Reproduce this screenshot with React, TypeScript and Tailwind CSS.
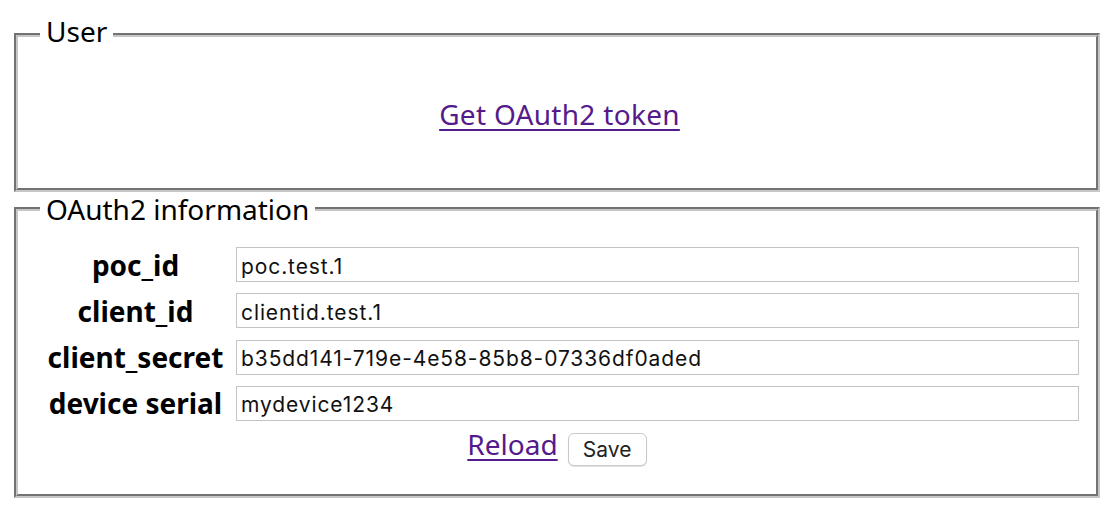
import React, { useState } from 'react';

const fields = [
  { label: 'poc_id', value: 'poc.test.1' },
  { label: 'client_id', value: 'clientid.test.1' },
  { label: 'client_secret', value: 'b35dd141-719e-4e58-85b8-07336df0aded' },
  { label: 'device serial', value: 'mydevice1234' },
];

const App: React.FC = () => {
  const [values, setValues] = useState(fields.map((f) => f.value));

  const update = (i: number, v: string) => {
    const next = [...values];
    next[i] = v;
    setValues(next);
  };

  return (
    <div className="min-h-[531px] bg-white pt-[12px] font-['Noto_Sans',sans-serif] text-black">
      <fieldset className="ml-[14px] w-[1086px] border-4 border-[#c6c6c6] [border-style:groove] pl-[22px] pr-[17px]">
        <legend className="px-[6px] pb-[8px] text-[28px] leading-[38px]">User</legend>
        <div className="h-[130px] pt-[37px] text-center">
          <a
            href="#"
            className="text-[28px] leading-[38px] tracking-[0.3px] text-[#551a8b] underline decoration-2 underline-offset-[4px]"
          >
            Get OAuth2 token
          </a>
        </div>
      </fieldset>

      <fieldset className="ml-[14px] w-[1086px] border-4 border-[#c6c6c6] [border-style:groove] pl-[22px] pr-[17px] pb-[28px]">
        <legend className="px-[6px] text-[28px] leading-[34px]">OAuth2 information</legend>
        <div className="grid grid-cols-[191px_1fr] gap-x-[5px] gap-y-[11.33px] pt-[21px]">
          {fields.map((f, i) => (
            <React.Fragment key={f.label}>
              <label className="flex h-[35px] items-center justify-center whitespace-nowrap text-[28px] font-bold leading-[38px]">
                {f.label}
              </label>
              <input
                type="text"
                value={values[i]}
                onChange={(e) => update(i, e.target.value)}
                className="h-[35px] w-full border border-[#c4c4c4] bg-white pl-[4px] pt-[3px] font-['Inter',sans-serif] text-[21px] tracking-[0.9px] text-[#111] outline-none"
              />
            </React.Fragment>
          ))}
        </div>
        <div className="-ml-[22px] -mr-[17px] mt-[4px] flex items-start justify-center gap-[10px]">
          <a
            href="#"
            className="text-[28px] leading-[38px] text-[#551a8b] underline decoration-2 underline-offset-[4px]"
          >
            Reload
          </a>
          <button
            type="button"
            className="mt-[8px] h-[33px] w-[79px] rounded-[6px] border border-[#c9c9c9] bg-white font-['Inter',sans-serif] text-[21px] text-[#222] shadow-[0_1px_1px_rgba(0,0,0,0.12)]"
          >
            Save
          </button>
        </div>
      </fieldset>
    </div>
  );
};

export default App;
